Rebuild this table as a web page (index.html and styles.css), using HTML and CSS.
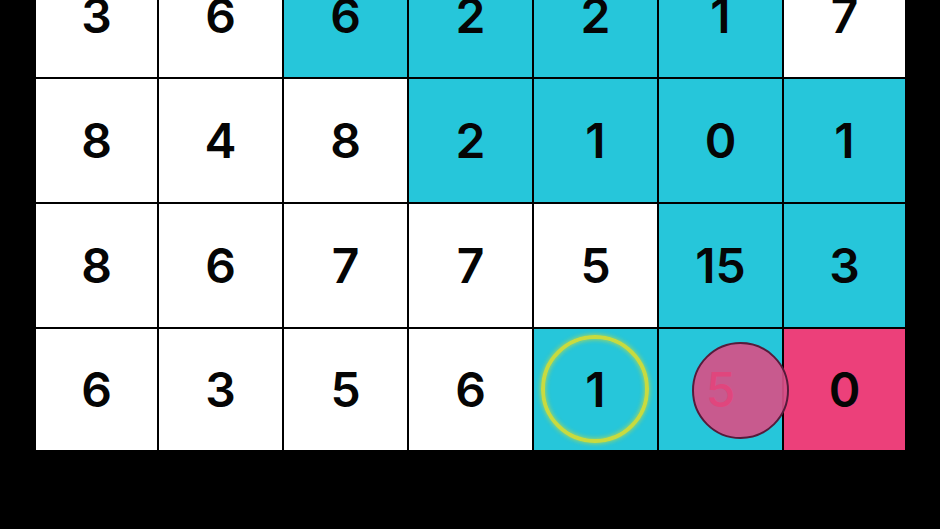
FILE: index.html
```html
<!DOCTYPE html>
<html>
<head>
<meta charset="utf-8">
<link rel="stylesheet" href="styles.css">
</head>
<body>
<div class="board">
  <div class="cell"><span class="num">3</span></div>
  <div class="cell"><span class="num">6</span></div>
  <div class="cell cyan"><span class="num">6</span></div>
  <div class="cell cyan"><span class="num">2</span></div>
  <div class="cell cyan"><span class="num">2</span></div>
  <div class="cell cyan"><span class="num">1</span></div>
  <div class="cell"><span class="num">7</span></div>

  <div class="cell"><span class="num">8</span></div>
  <div class="cell"><span class="num">4</span></div>
  <div class="cell"><span class="num">8</span></div>
  <div class="cell cyan"><span class="num">2</span></div>
  <div class="cell cyan"><span class="num">1</span></div>
  <div class="cell cyan"><span class="num">0</span></div>
  <div class="cell cyan"><span class="num">1</span></div>

  <div class="cell"><span class="num">8</span></div>
  <div class="cell"><span class="num">6</span></div>
  <div class="cell"><span class="num">7</span></div>
  <div class="cell"><span class="num">7</span></div>
  <div class="cell"><span class="num">5</span></div>
  <div class="cell cyan"><span class="num">15</span></div>
  <div class="cell cyan"><span class="num">3</span></div>

  <div class="cell"><span class="num">6</span></div>
  <div class="cell"><span class="num">3</span></div>
  <div class="cell"><span class="num">5</span></div>
  <div class="cell"><span class="num">6</span></div>
  <div class="cell cyan"><span class="ring"></span><span class="num">1</span></div>
  <div class="cell cyan"><span class="blob"></span><span class="num hidden">5</span></div>
  <div class="cell pink"><span class="num">0</span></div>
</div>
</body>
</html>
```
FILE: styles.css
```css
html, body {
  margin: 0;
  padding: 0;
  background: #000;
  width: 940px;
  height: 529px;
  overflow: hidden;
}

.board {
  display: grid;
  grid-template-columns: 121px repeat(5, 123px) 121px;
  grid-template-rows: repeat(3, 123px) 121px;
  gap: 2px;
  margin-top: -46px;
  margin-left: 36px;
  width: 869px;
  background: #000;
}

.cell {
  position: relative;
  background: #fff;
  display: flex;
  align-items: center;
  justify-content: center;
  font-family: "Inter", "Liberation Sans", sans-serif;
  font-weight: 600;
  font-size: 48px;
  color: #050505;
}

.cell.cyan { background: #26c6da; }
.cell.pink { background: #ec407a; }

.num {
  position: relative;
  z-index: 3;
  line-height: 1;
}

.num.hidden { color: #e0467d; font-weight: 500; }

.ring {
  position: absolute;
  left: 7px;
  top: 6px;
  width: 100px;
  height: 100px;
  border: 4px solid #c8db3f;
  border-radius: 50%;
  box-shadow: 0 0 5px rgba(205, 220, 57, 0.9), inset 0 0 5px rgba(205, 220, 57, 0.9);
}

.blob {
  position: absolute;
  left: 33px;
  top: 13px;
  width: 93px;
  height: 93px;
  border: 2px solid #561b3b;
  border-radius: 50%;
  background: rgba(214, 80, 136, 0.92);
  z-index: 2;
}
```
